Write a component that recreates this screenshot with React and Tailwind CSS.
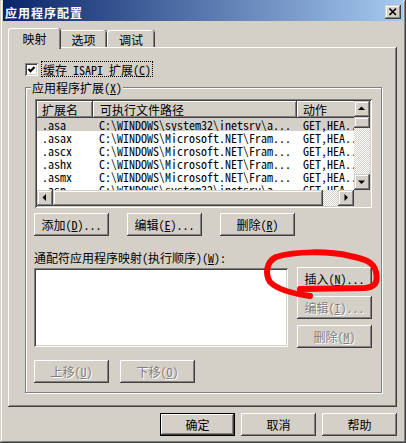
import React from "react";

const RAISED = "shadow-[inset_-1px_-1px_#404040,inset_1px_1px_#fff,inset_-2px_-2px_#808080]";
const SCROLLBTN = "shadow-[inset_-1px_-1px_#404040,inset_1px_1px_#d4d0c8,inset_-2px_-2px_#808080,inset_2px_2px_#fff]";
const SUNKEN = "shadow-[inset_1px_1px_#808080,inset_-1px_-1px_#fff,inset_2px_2px_#404040,inset_-2px_-2px_#d4d0c8]";
const CHECKER = "bg-[repeating-conic-gradient(#d4d0c8_0_25%,#fff_0_50%)] bg-[length:2px_2px]";

function Btn({ children, disabled, def }) {
  return (
    <div
      className={
        "w-[75px] h-[23px] shrink-0 flex items-center justify-center bg-[#d4d0c8] text-[12px] leading-[13px] " +
        (def ? "border border-black " : "") +
        RAISED +
        (disabled ? " text-[#808080] [text-shadow:1px_1px_0_#fff]" : " text-black")
      }
    >
      <span className="whitespace-pre">{children}</span>
    </div>
  );
}

function Arrow({ dir }) {
  const pts = {
    up: "4,9 7.5,5.5 11,9",
    down: "4,6.5 7.5,10 11,6.5",
    left: "9,4 5.5,7.5 9,11",
    right: "6.5,4 10,7.5 6.5,11",
  }[dir];
  return (
    <div className={"w-[16px] h-[16px] shrink-0 bg-[#d4d0c8] " + SCROLLBTN}>
      <svg width="16" height="16" viewBox="0 0 16 16">
        <polygon points={pts} fill="#000" />
      </svg>
    </div>
  );
}

const rows = [
  [".asa", "C:\\WINDOWS\\system32\\inetsrv\\a...", true],
  [".asax", "C:\\WINDOWS\\Microsoft.NET\\Fram...", false],
  [".ascx", "C:\\WINDOWS\\Microsoft.NET\\Fram...", false],
  [".ashx", "C:\\WINDOWS\\Microsoft.NET\\Fram...", false],
  [".asmx", "C:\\WINDOWS\\Microsoft.NET\\Fram...", false],
  [".asp", "C:\\WINDOWS\\system32\\inetsrv\\a...", false],
];

function HeaderCell({ w, children }) {
  return (
    <div className={"h-[17px] shrink-0 flex items-center pl-[5px] bg-[#d4d0c8] " + RAISED + " " + w}>
      <span className="whitespace-pre">{children}</span>
    </div>
  );
}

export default function App() {
  return (
    <div
      className={
        "relative w-[406px] h-[443px] overflow-hidden bg-[#d4d0c8] text-black text-[12px] leading-[13px] [font-family:'Noto_Sans_Mono_CJK_SC','Noto_Sans_CJK_SC',monospace] shadow-[inset_-1px_-1px_#404040,inset_1px_1px_#d4d0c8,inset_-2px_-2px_#808080,inset_2px_2px_#fff]"
      }
    >
      {/* title bar */}
      <div className="ml-[3px] w-[400px] h-[21px] pt-[3px] flex items-center justify-between bg-[linear-gradient(90deg,#0a246a,#a6caf0)]">
        <span className="pl-[2px] text-white font-bold tracking-[1px]">应用程序配置</span>
        <div className={"mr-[2px] w-[16px] h-[14px] bg-[#d4d0c8] " + SCROLLBTN}>
          <svg width="16" height="14" viewBox="0 0 16 14">
            <path d="M4.5 3.5 L11 10 M11 3.5 L4.5 10" stroke="#000" strokeWidth="1.6" />
          </svg>
        </div>
      </div>

      {/* tabs */}
      <div className="ml-[8px] mt-[7px] h-[19px] flex items-end">
        <div className="relative z-10 w-[52px] h-[21px] -mb-[2px] bg-[#d4d0c8] rounded-t-[3px] border-t border-l border-white shadow-[inset_-1px_0_#808080,1px_0_#404040] flex justify-center pt-[3px]">
          映射
        </div>
        <div className="-ml-[2px] w-[48px] h-[17px] bg-[#d4d0c8] rounded-t-[3px] border-t border-l border-white shadow-[inset_-1px_0_#808080,1px_0_#404040] flex justify-center pt-[2px]">
          <span className="pl-[2px]">选项</span>
        </div>
        <div className="ml-[1px] w-[47px] h-[17px] bg-[#d4d0c8] rounded-t-[3px] border-t border-l border-white shadow-[inset_-1px_0_#808080,1px_0_#404040] flex justify-center pt-[2px]">
          调试
        </div>
      </div>

      {/* panel */}
      <div className={"ml-[8px] w-[389px] h-[360px] pt-[14px] pl-[17px] bg-[#d4d0c8] " + RAISED.replace("inset_1px_1px_#fff", "inset_1px_1px_#fff")}>
        {/* checkbox row */}
        <div className="h-[16px] flex items-center">
          <div className={"w-[13px] h-[13px] bg-white " + SUNKEN}>
            <svg width="13" height="13" viewBox="0 0 13 13">
              <polyline points="3.5,6 5.5,8.2 9.5,4" fill="none" stroke="#000" strokeWidth="2" />
            </svg>
          </div>
          <div className="ml-[3px] h-[16px] px-[1px] border border-dotted border-black flex items-center whitespace-pre">
            缓存 ISAPI 扩展(<u>C</u>)
          </div>
        </div>

        {/* group box */}
        <div className="mt-[10px] w-[357px] h-[306px] border border-[#808080] shadow-[inset_1px_1px_#fff,1px_1px_#fff] flex flex-col">
          <div className="-mt-[7px] ml-[5px] w-fit px-[1px] h-[13px] bg-[#d4d0c8] whitespace-pre">
            应用程序扩展(<u>X</u>)
          </div>

          {/* list view */}
          <div className={"mt-[5px] ml-[9px] w-[337px] h-[109px] p-[2px] bg-white " + SUNKEN}>
            <div className="grid grid-cols-[317px_16px] grid-rows-[89px_16px]">
              <div className="overflow-hidden bg-white">
                <div className="flex">
                  <HeaderCell w="w-[56px]">扩展名</HeaderCell>
                  <HeaderCell w="w-[204px] pl-[7px]">可执行文件路径</HeaderCell>
                  <HeaderCell w="w-[80px] pl-[6px]">动作</HeaderCell>
                </div>
                {rows.map(([ext, path, sel]) => (
                  <div key={ext} className={"h-[13px] flex items-center whitespace-pre " + (sel ? "bg-[#d4d0c8]" : "")}>
                    <div className="w-[56px] shrink-0 pl-[5px]">{ext}</div>
                    <div className="w-[204px] shrink-0 pl-[6px] overflow-hidden">{path}</div>
                    <div className="w-[80px] shrink-0 pl-[6px]">GET,HEA...</div>
                  </div>
                ))}
              </div>
              <div className="flex flex-col">
                <Arrow dir="up" />
                <div className={"w-[16px] h-[11px] bg-[#d4d0c8] " + SCROLLBTN} />
                <div className={"flex-1 " + CHECKER} />
                <Arrow dir="down" />
              </div>
              <div className="flex">
                <Arrow dir="left" />
                <div className={"w-[270px] h-[16px] bg-[#d4d0c8] " + SCROLLBTN} />
                <div className={"flex-1 " + CHECKER} />
                <Arrow dir="right" />
              </div>
              <div className="bg-[#d4d0c8]" />
            </div>
          </div>

          {/* buttons */}
          <div className="mt-[5px] ml-[8px] flex gap-[18px]">
            <Btn>添加(<u>D</u>)...</Btn>
            <Btn>编辑(<u>E</u>)...</Btn>
            <Btn>删除(<u>R</u>)</Btn>
          </div>

          <div className="mt-[15px] ml-[8px] h-[13px] whitespace-pre">
            通配符应用程序映射(执行顺序)(<u>W</u>):
          </div>

          <div className="mt-[3px] ml-[8px] flex">
            <div className={"mt-[1px] w-[254px] h-[79px] bg-white " + SUNKEN} />
            <div className="ml-[9px] flex flex-col gap-[6px]">
              <Btn>插入(<u>N</u>)...</Btn>
              <Btn disabled>编辑(<u>I</u>)...</Btn>
              <Btn disabled>删除(<u>M</u>)</Btn>
            </div>
          </div>

          <div className="mt-[12px] ml-[8px] flex gap-[11px]">
            <Btn disabled>上移(<u>U</u>)</Btn>
            <Btn disabled>下移(<u>O</u>)</Btn>
          </div>
        </div>
      </div>

      {/* bottom buttons */}
      <div className="mt-[6px] pr-[9px] flex justify-end gap-[6px]">
        <Btn def>确定</Btn>
        <Btn>取消</Btn>
        <Btn>帮助</Btn>
      </div>

      {/* red scribble overlay */}
      <svg className="absolute left-0 top-0 pointer-events-none" width="406" height="443" viewBox="0 0 406 443">
        <path
          d="M310 296 C295 294 278 290 270 282 C265 274 266 262 276 257 C295 251 330 251 350 256 C365 259 374 262 376 272 C378 282 376 287 365 288 L300 289"
          fill="none"
          stroke="#ff0000"
          strokeWidth="6"
          strokeLinecap="round"
          strokeLinejoin="round"
        />
      </svg>
    </div>
  );
}
